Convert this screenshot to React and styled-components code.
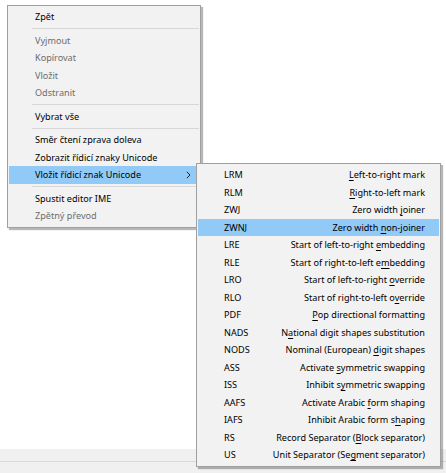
import React from "react";
import styled, { createGlobalStyle } from "styled-components";

const mainItems = [
  { label: "Zpět" },
  { sep: true },
  { label: "Vyjmout", disabled: true },
  { label: "Kopírovat", disabled: true },
  { label: "Vložit", disabled: true },
  { label: "Odstranit", disabled: true },
  { sep: true },
  { label: "Vybrat vše" },
  { sep: true },
  { label: "Směr čtení zprava doleva" },
  { label: "Zobrazit řídicí znaky Unicode" },
  { label: "Vložit řídicí znak Unicode", active: true, submenu: true },
  { sep: true },
  { label: "Spustit editor IME" },
  { label: "Zpětný převod", disabled: true },
];

// [code, text before key, access key, text after key]
const controlChars = [
  ["LRM", "", "L", "eft-to-right mark"],
  ["RLM", "", "R", "ight-to-left mark"],
  ["ZWJ", "Zero width ", "j", "oiner"],
  ["ZWNJ", "Zero width ", "n", "on-joiner", true],
  ["LRE", "Start of left-to-right ", "e", "mbedding"],
  ["RLE", "Start of right-to-left e", "m", "bedding"],
  ["LRO", "Start of left-to-right ", "o", "verride"],
  ["RLO", "Start of right-to-left o", "v", "erride"],
  ["PDF", "", "P", "op directional formatting"],
  ["NADS", "N", "a", "tional digit shapes substitution"],
  ["NODS", "Nominal (European) ", "d", "igit shapes"],
  ["ASS", "Activate ", "s", "ymmetric swapping"],
  ["ISS", "Inhibit s", "y", "mmetric swapping"],
  ["AAFS", "Activate Arabic ", "f", "orm shaping"],
  ["IAFS", "Inhibit Arabic form s", "h", "aping"],
  ["RS", "Record Separator (", "B", "lock separator)"],
  ["US", "Unit Separator (Se", "g", "ment separator)"],
];

const App = () => {
  return (
    <>
      <GlobalStyle />
      <Screen>
        <EditArea />
        <ScrollStrip />
        <StatusStrip />

        <Menu $left={7} $top={5} $width={194}>
          {mainItems.map((item, i) =>
            item.sep ? (
              <Separator key={i} />
            ) : (
              <Item key={i} $disabled={item.disabled} $active={item.active}>
                <span>{item.label}</span>
                {item.submenu && (
                  <Chevron width="5" height="8" viewBox="0 0 5 8">
                    <path d="M0.8 0.8 L4 4 L0.8 7.2" fill="none" stroke="#222" strokeWidth="1" />
                  </Chevron>
                )}
              </Item>
            )
          )}
        </Menu>

        <Menu $left={196} $top={163} $width={245}>
          {controlChars.map(([code, before, key, after, active]) => (
            <Item key={code} $active={active} $split>
              <Code>{code}</Code>
              <Description>
                {before}
                <AccessKey>{key}</AccessKey>
                {after}
              </Description>
            </Item>
          ))}
        </Menu>
      </Screen>
    </>
  );
};

const GlobalStyle = createGlobalStyle`
  html, body {
    margin: 0;
    padding: 0;
    background: #ffffff;
  }
  body {
    font-family: "Noto Sans", "Open Sans", Arial, sans-serif;
  }
`;

const Screen = styled.div`
  position: relative;
  width: 446px;
  height: 473px;
  display: flex;
  flex-direction: column;
  overflow: hidden;
  background: #ffffff;
`;

const EditArea = styled.div`
  flex: 1;
  background: #ffffff;
`;

const ScrollStrip = styled.div`
  height: 12px;
  background: #f0f0f0;
  border-bottom: 1px solid #d9d9d9;
`;

const StatusStrip = styled.div`
  height: 11px;
  background: #f0f0f0;
`;

const Menu = styled.div`
  position: absolute;
  left: ${(p) => p.$left}px;
  top: ${(p) => p.$top}px;
  width: ${(p) => p.$width}px;
  box-sizing: border-box;
  padding: 2px 1px;
  background: #f2f2f2;
  border: 1px solid #a0a0a0;
  box-shadow: 2px 2px 1px rgba(0, 0, 0, 0.28);
  display: flex;
  flex-direction: column;
`;

const Item = styled.div`
  height: 17.5px;
  display: flex;
  align-items: center;
  justify-content: space-between;
  padding: 0 ${(p) => (p.$split ? 14 : 8)}px 0 26px;
  font-size: 9.1px;
  line-height: 1;
  white-space: nowrap;
  color: ${(p) => (p.$disabled ? "#6d6d6d" : "#000000")};
  background: ${(p) => (p.$active ? "#91c9f7" : "transparent")};
`;

const Chevron = styled.svg`
  display: block;
`;

const Code = styled.span``;

const Description = styled.span`
  text-align: right;
`;

const AccessKey = styled.span`
  text-decoration: underline;
  text-underline-offset: 1.5px;
`;

const Separator = styled.div`
  height: 6px;
  display: flex;
  align-items: center;
  padding-left: 23px;

  &::after {
    content: "";
    flex: 1;
    height: 1px;
    background: #d7d7d7;
  }
`;

export default App;
